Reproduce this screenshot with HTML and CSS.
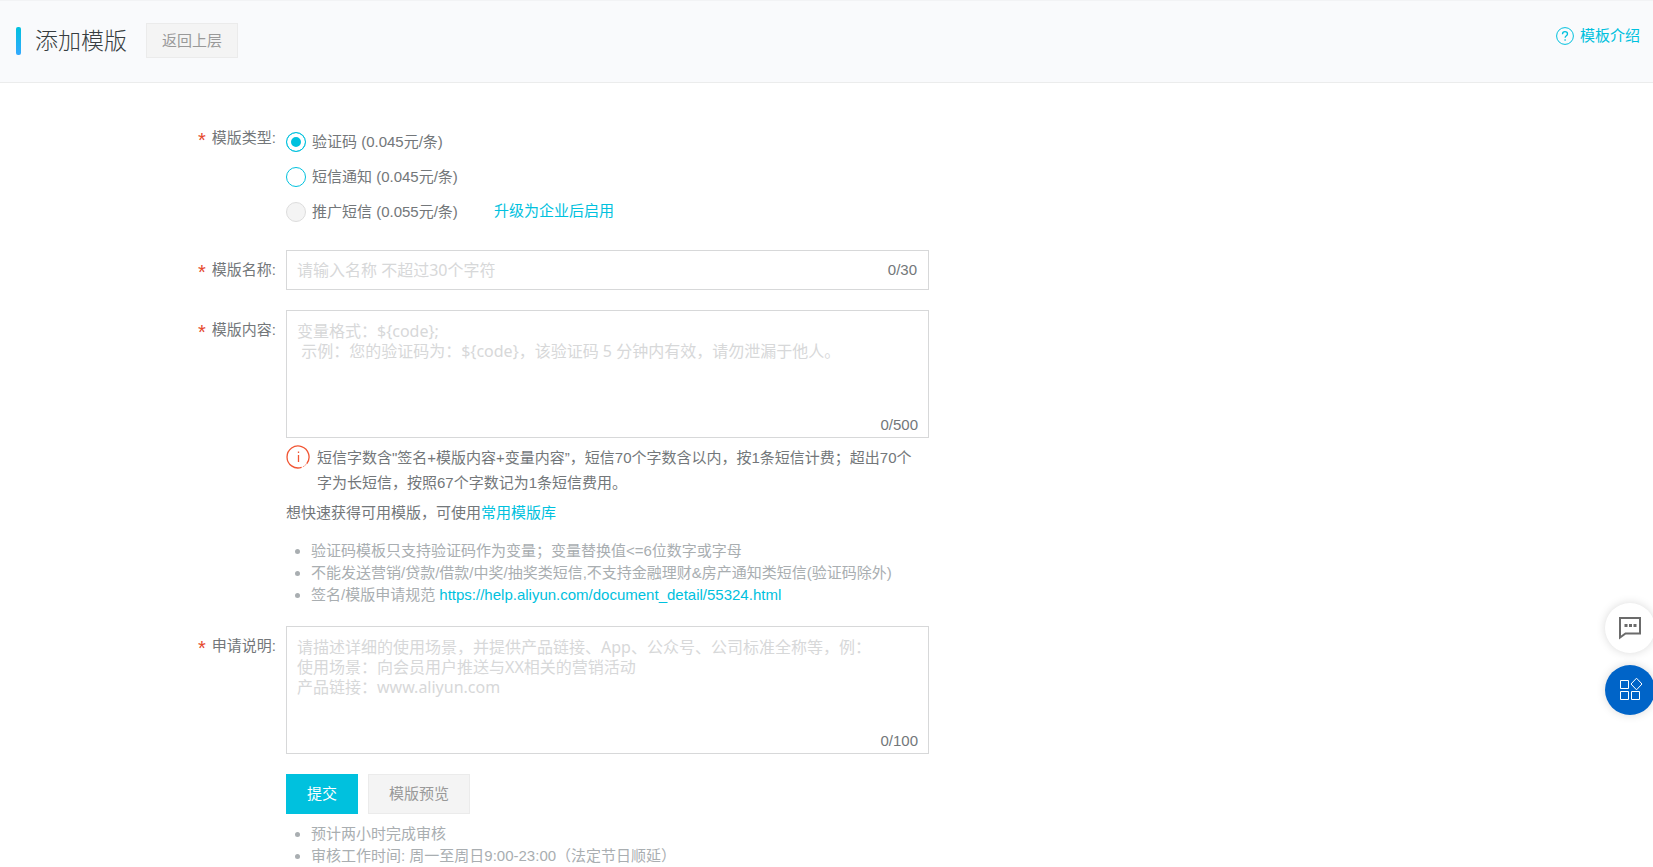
FILE: index.html
```html
<!DOCTYPE html>
<html lang="zh-CN">

<head>
  <meta charset="UTF-8">
  <meta name="viewport" content="width=device-width, initial-scale=1.0">
  <title>添加模版</title>
  <link rel="stylesheet" href="styles.css">
</head>

<body>
  <header class="page-header">
    <h1 class="page-title">添加模版</h1>
    <button type="button" class="btn btn-default btn-back">返回上层</button>
    <a class="help-link" href="#">
      <svg width="18" height="18" viewBox="0 0 18 18" fill="none" stroke="currentColor">
        <circle cx="9" cy="9" r="8.4" />
        <path d="M6.500 7.200c0-1.500 1.100-2.500 2.500-2.500s2.500 1 2.500 2.200c0 1.700-2.400 1.900-2.400 3.900M9.100 12.200v1.500" stroke-width="1.300" />
      </svg>
      模板介绍
    </a>
  </header>

  <form class="template-form">
    <div class="form-row form-row-type" role="radiogroup" aria-labelledby="typeLabel">
      <span class="form-label form-label-top" id="typeLabel">模版类型:</span>
      <div class="form-content">
        <div class="radio-row">
          <label class="radio"><input type="radio" name="type" value="code" checked>验证码 (0.045元/条)</label>
        </div>
        <div class="radio-row">
          <label class="radio"><input type="radio" name="type" value="notice">短信通知 (0.045元/条)</label>
        </div>
        <div class="radio-row">
          <label class="radio"><input type="radio" name="type" value="promo" disabled>推广短信 (0.055元/条)</label>
          <a class="upgrade" href="#">升级为企业后启用</a>
        </div>
      </div>
    </div>

    <div class="form-row">
      <label class="form-label" for="tplName">模版名称:</label>
      <div class="form-content">
        <div class="field">
          <input type="text" id="tplName" class="control" maxlength="30" placeholder="请输入名称 不超过30个字符">
          <span class="counter">0/30</span>
        </div>
      </div>
    </div>

    <div class="form-row">
      <label class="form-label" for="tplContent">模版内容:</label>
      <div class="form-content">
        <div class="field">
          <textarea id="tplContent" class="control" maxlength="500" placeholder="变量格式：${code};&#10; 示例：您的验证码为：${code}，该验证码 5 分钟内有效，请勿泄漏于他人。"></textarea>
          <span class="counter">0/500</span>
        </div>
        <div class="tip">
          <svg width="24" height="24" viewBox="0 0 24 24" fill="none" stroke="currentColor">
            <path d="M15.500 22.400A11 11 0 1 1 20.800 18.600" stroke-width="1.300" />
            <path d="M20.800 18.600Q18.500 21.400 15.500 22.400" stroke-width=".7" stroke-dasharray="2 1" />
            <path d="M12.500 10v7M12.500 6.500v1.500" stroke-width="1.300" />
          </svg>
          <p>短信字数含"签名+模版内容+变量内容”，短信70个字数含以内，按1条短信计费；超出70个字为长短信，按照67个字数记为1条短信费用。</p>
        </div>
        <p class="quick">想快速获得可用模版，可使用<a href="#">常用模版库</a></p>
        <ul class="notes">
          <li>验证码模板只支持验证码作为变量；变量替换值&lt;=6位数字或字母</li>
          <li>不能发送营销/贷款/借款/中奖/抽奖类短信,不支持金融理财&amp;房产通知类短信(验证码除外)</li>
          <li>签名/模版申请规范 <a href="#">https://help.aliyun.com/document_detail/55324.html</a></li>
        </ul>
      </div>
    </div>

    <div class="form-row">
      <label class="form-label" for="tplRemark">申请说明:</label>
      <div class="form-content">
        <div class="field">
          <textarea id="tplRemark" class="control" maxlength="100" placeholder="请描述详细的使用场景，并提供产品链接、App、公众号、公司标准全称等，例：&#10;使用场景：向会员用户推送与XX相关的营销活动&#10;产品链接：www.aliyun.com"></textarea>
          <span class="counter">0/100</span>
        </div>
      </div>
    </div>

    <div class="form-row form-row-last">
      <div class="form-content form-actions">
        <div class="buttons">
          <button type="submit" class="btn btn-primary">提交</button>
          <button type="button" class="btn btn-default">模版预览</button>
        </div>
        <ul class="notes notes-footer">
          <li>预计两小时完成审核</li>
          <li>审核工作时间: 周一至周日9:00-23:00（法定节日顺延）</li>
        </ul>
      </div>
    </div>
  </form>

  <div class="float-bar">
    <button type="button" class="float-btn" aria-label="咨询">
      <svg width="24" height="24" viewBox="0 0 24 24" fill="none" stroke="#6b6b6b">
        <path d="M2 2h20v15.500H7.500L2 21.500z" stroke-width="2" />
        <path d="M6.500 9.500h3M11 9.500h3M15.500 9.500h3" stroke-width="3" />
      </svg>
    </button>
    <button type="button" class="float-btn float-btn-blue" aria-label="应用">
      <svg width="24" height="24" viewBox="0 0 24 24" fill="none" stroke="#fff">
        <path d="M2.500 2.500h8v8h-8zM2.500 13.500h8v8h-8zM13.500 13.500h8v8h-8zM18.500.2l5.500 5.800-5.500 5.800L13 6z" />
      </svg>
    </button>
  </div>
</body>

</html>
```
FILE: styles.css
```css
* {
  box-sizing: border-box;
}
body {
  margin: 0;
  font-family: "Liberation Sans", "Noto Sans CJK SC", sans-serif;
  font-size: 15px;
  line-height: 22px;
  color: #73777a;
  background-color: #fff;
}
a {
  color: #00c1de;
  text-decoration: none;
}
p {
  margin: 0;
}

/* header */
.page-header {
  display: flex;
  align-items: center;
  height: 83px;
  padding: 0 13px 2px 16px;
  background-color: #f9fafc;
  border-top: 1px solid #f2f3f5;
  border-bottom: 1px solid #ebecec;
}
.page-title {
  display: flex;
  align-items: center;
  gap: 14px;
  margin: 0 19px 0 0;
  font-size: 23px;
  line-height: 28px;
  font-weight: 300;
  color: #373d41;
}
.page-title::before {
  content: "";
  width: 5px;
  height: 28px;
  border-radius: 2px;
  background: linear-gradient(#00c1de, #34a9ff);
}
.help-link {
  display: flex;
  align-items: center;
  gap: 6px;
  margin-left: auto;
  padding-bottom: 10px;
}

/* buttons */
.btn {
  height: 40px;
  padding: 0 20px;
  border: 1px solid transparent;
  font-family: inherit;
  font-size: 15px;
  line-height: 22px;
  cursor: pointer;
}
.btn-default {
  background-color: #f4f4f4;
  border-color: #ebebeb;
  color: #999;
}
.btn-primary {
  background-color: #00c1de;
  border-color: #00c1de;
  color: #fff;
}
.btn-back {
  height: 35px;
  padding: 0 15px;
}

/* form */
.template-form {
  padding-top: 41px;
}
.form-row {
  display: flex;
  gap: 10px;
  margin-bottom: 20px;
}
.form-row-type {
  margin-bottom: 21px;
}
.form-row-last {
  margin-bottom: 0;
}
.form-label {
  display: flex;
  flex: none;
  justify-content: flex-end;
  align-items: center;
  gap: 6px;
  width: 276px;
  height: 40px;
}
.form-label::before {
  content: "*";
  height: 16px;
  font-size: 20px;
  line-height: 20px;
  color: #e5482d;
}
.form-label-top {
  height: 28px;
}
.form-content {
  flex: 1;
  min-width: 0;
  max-width: 643px;
}
.form-actions {
  margin-left: 286px;
}

.radio-row {
  display: flex;
  align-items: center;
  gap: 36px;
  height: 35px;
}
.radio {
  display: flex;
  align-items: center;
  gap: 6px;
}
.radio input {
  appearance: none;
  width: 20px;
  height: 20px;
  margin: 0;
  border: 1px solid #00c1de;
  border-radius: 50%;
  background-color: #fff;
}
.radio input:checked {
  background-color: #00c1de;
  box-shadow: inset 0 0 0 4px #fff;
}
.radio input:disabled {
  border-color: #ddd;
  background-color: #f4f4f4;
}
.upgrade {
  padding-bottom: 2px;
}

.field {
  position: relative;
}
.control {
  display: block;
  width: 100%;
  height: 40px;
  padding: 0 10px;
  border: 1px solid #d7d8d9;
  border-radius: 0;
  outline: none;
  background-color: #fff;
  font-family: "Noto Sans", "Noto Sans CJK SC", sans-serif;
  font-size: 16px;
  line-height: 20px;
  color: #73777a;
}
textarea.control {
  height: 128px;
  padding: 10px;
  resize: none;
}
.control::placeholder {
  color: #d7d8d9;
  opacity: 1;
}
.counter {
  position: absolute;
  right: 11px;
  bottom: 2px;
}
input + .counter {
  right: 12px;
  bottom: 9px;
}

.tip {
  display: flex;
  align-items: flex-start;
  gap: 7px;
  margin-top: 7px;
  padding-right: 8px;
  line-height: 25px;
}
.tip svg {
  flex: none;
  color: #f15533;
}
.quick {
  margin-top: 6px;
  line-height: 24px;
}
.notes {
  margin: 15px 0 0;
  padding-left: 25px;
  color: #a9aeb1;
}
.notes-footer {
  margin-top: 9px;
}
.buttons {
  display: flex;
  gap: 10px;
}

/* floating tools on the right edge */
.float-bar {
  position: fixed;
  right: -2px;
  bottom: 152px;
  display: flex;
  flex-direction: column;
  gap: 12px;
}
.float-btn {
  display: flex;
  align-items: center;
  justify-content: center;
  width: 50px;
  height: 50px;
  padding: 0;
  border: none;
  border-radius: 50%;
  background-color: #fff;
  box-shadow: 0 0 10px rgba(0, 0, 0, 0.15);
  cursor: pointer;
}
.float-btn-blue {
  background-color: #0064c8;
}
```
